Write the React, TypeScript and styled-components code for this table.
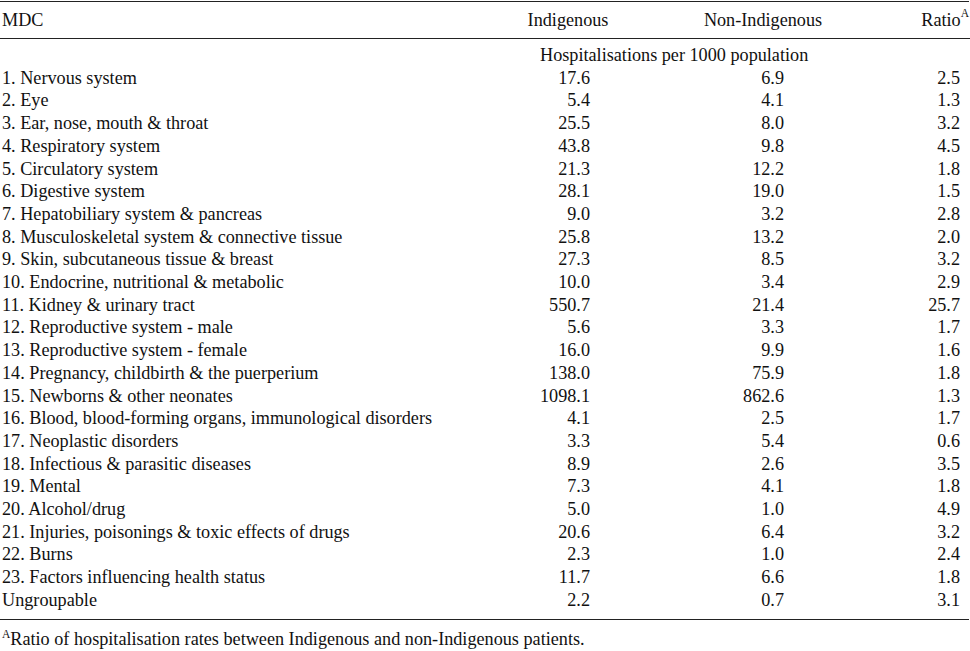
import React from "react";
import styled, { createGlobalStyle } from "styled-components";

const Global = createGlobalStyle`
  html, body { margin: 0; padding: 0; background: #fff; }
  body { font-family: "Liberation Serif", "Times New Roman", serif; color: #111; }
`;

const Wrap = styled.div`
  width: 970px;
  padding-top: 1px;
  font-family: "Liberation Serif", "Times New Roman", serif;
  font-size: 18.2px;
`;

const Table = styled.div`
  display: grid;
  grid-template-columns: 490px 156px 234px 90px;
  border-top: 1.5px solid #222;
  border-bottom: 1.5px solid #222;
  width: 969px;
`;

const HeadCell = styled.div<{ $align: "left" | "center" | "right"; $pr?: number }>`
  height: 36px;
  display: flex;
  align-items: center;
  justify-content: ${(p) => (p.$align === "left" ? "flex-start" : p.$align === "center" ? "center" : "flex-end")};
  padding-left: ${(p) => (p.$align === "left" ? 2 : 0)}px;
  padding-right: ${(p) => p.$pr ?? 0}px;
  border-bottom: 1.5px solid #222;
  white-space: nowrap;
`;

const Sup = styled.sup`
  font-size: 11.5px;
  vertical-align: 0;
  position: relative;
  top: -7px;
`;

const SubHead = styled.div`
  grid-column: 2 / 5;
  padding-left: 50px;
  padding-top: 5px;
  line-height: 22.7px;
  white-space: nowrap;
`;

const Blank = styled.div`
  padding-top: 5px;
`;

const LabelCell = styled.div<{ $last?: boolean }>`
  padding-left: 2px;
  line-height: 22.7px;
  white-space: nowrap;
  padding-bottom: ${(p) => (p.$last ? 7 : 0)}px;
`;

const NumCell = styled.div<{ $pr: number; $last?: boolean }>`
  text-align: right;
  padding-right: ${(p) => p.$pr}px;
  line-height: 22.7px;
  white-space: nowrap;
  padding-bottom: ${(p) => (p.$last ? 7 : 0)}px;
`;

const Footnote = styled.div`
  padding-left: 2px;
  padding-top: 8px;
  line-height: 22px;
`;

const rows: [string, string, string, string][] = [
  ["1. Nervous system", "17.6", "6.9", "2.5"],
  ["2. Eye", "5.4", "4.1", "1.3"],
  ["3. Ear, nose, mouth & throat", "25.5", "8.0", "3.2"],
  ["4. Respiratory system", "43.8", "9.8", "4.5"],
  ["5. Circulatory system", "21.3", "12.2", "1.8"],
  ["6. Digestive system", "28.1", "19.0", "1.5"],
  ["7. Hepatobiliary system & pancreas", "9.0", "3.2", "2.8"],
  ["8. Musculoskeletal system & connective tissue", "25.8", "13.2", "2.0"],
  ["9. Skin, subcutaneous tissue & breast", "27.3", "8.5", "3.2"],
  ["10. Endocrine, nutritional & metabolic", "10.0", "3.4", "2.9"],
  ["11. Kidney & urinary tract", "550.7", "21.4", "25.7"],
  ["12. Reproductive system - male", "5.6", "3.3", "1.7"],
  ["13. Reproductive system - female", "16.0", "9.9", "1.6"],
  ["14. Pregnancy, childbirth & the puerperium", "138.0", "75.9", "1.8"],
  ["15. Newborns & other neonates", "1098.1", "862.6", "1.3"],
  ["16. Blood, blood-forming organs, immunological disorders", "4.1", "2.5", "1.7"],
  ["17. Neoplastic disorders", "3.3", "5.4", "0.6"],
  ["18. Infectious & parasitic diseases", "8.9", "2.6", "3.5"],
  ["19. Mental", "7.3", "4.1", "1.8"],
  ["20. Alcohol/drug", "5.0", "1.0", "4.9"],
  ["21. Injuries, poisonings & toxic effects of drugs", "20.6", "6.4", "3.2"],
  ["22. Burns", "2.3", "1.0", "2.4"],
  ["23. Factors influencing health status", "11.7", "6.6", "1.8"],
  ["Ungroupable", "2.2", "0.7", "3.1"],
];

export default function App() {
  return (
    <Wrap>
      <Global />
      <Table>
        <HeadCell $align="left">MDC</HeadCell>
        <HeadCell $align="center">Indigenous</HeadCell>
        <HeadCell $align="center">Non-Indigenous</HeadCell>
        <HeadCell $align="right" $pr={1}>
          Ratio<Sup>A</Sup>
        </HeadCell>
        <Blank />
        <SubHead>Hospitalisations per 1000 population</SubHead>
        {rows.map((r, i) => {
          const last = i === rows.length - 1;
          return (
            <React.Fragment key={r[0]}>
              <LabelCell $last={last}>{r[0]}</LabelCell>
              <NumCell $pr={56} $last={last}>{r[1]}</NumCell>
              <NumCell $pr={96} $last={last}>{r[2]}</NumCell>
              <NumCell $pr={10} $last={last}>{r[3]}</NumCell>
            </React.Fragment>
          );
        })}
      </Table>
      <Footnote>
        <Sup>A</Sup>Ratio of hospitalisation rates between Indigenous and non-Indigenous patients.
      </Footnote>
    </Wrap>
  );
}
